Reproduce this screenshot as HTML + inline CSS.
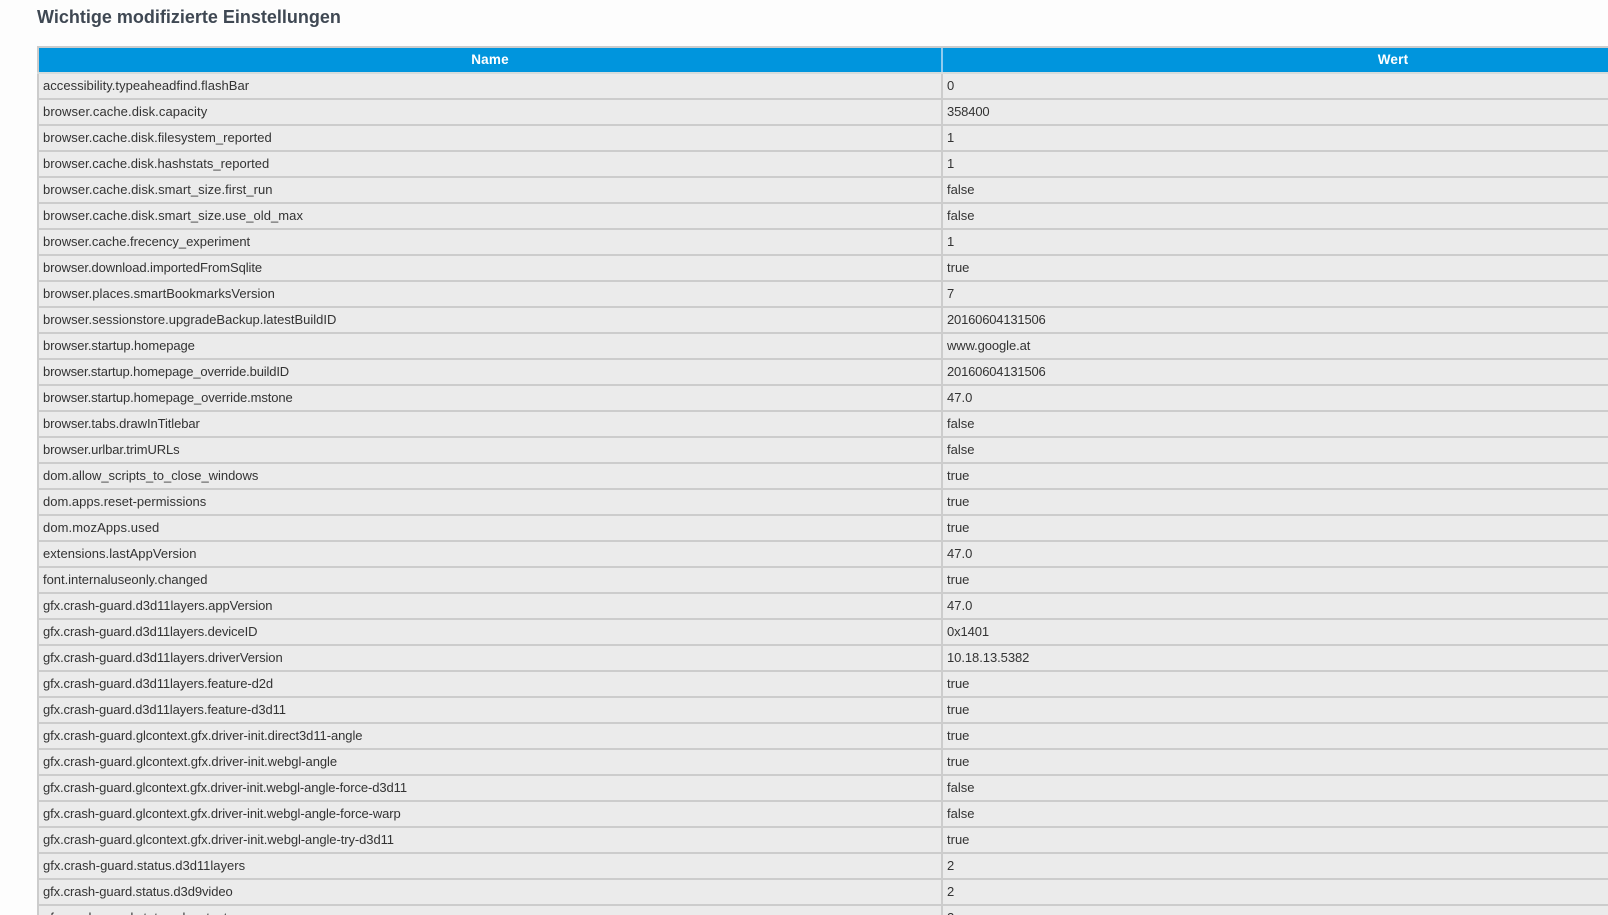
<!DOCTYPE html>
<html lang="de">
<head>
<meta charset="utf-8">
<title>Wichtige modifizierte Einstellungen</title>
<style>
html,body{margin:0;padding:0;width:1608px;height:915px;overflow:hidden;background:#fdfdfd;}
body{position:relative;font-family:"Liberation Sans",Arial,sans-serif;}
h2{position:absolute;left:37px;top:7px;margin:0;font-size:18px;line-height:20px;font-weight:bold;color:#3f4853;white-space:nowrap;}
table{position:absolute;left:37px;top:46px;width:1808px;table-layout:fixed;border-collapse:separate;border-spacing:2px;background:#cccccc;font-size:13px;color:#333;}
th{box-sizing:border-box;height:24px;padding:0 0 1px 0;background:#0095dd;color:#fff;font-size:13.5px;letter-spacing:.2px;line-height:23px;font-weight:bold;text-align:center;}
td{height:24px;padding:0 0 0 4px;background:#ebebeb;white-space:nowrap;overflow:hidden;line-height:24px;}
.sep{position:absolute;left:941px;top:48px;width:2px;height:24px;background:#8fcbef;}
.l{position:absolute;left:37px;top:72px;width:1571px;height:2px;background:#d5dcdc;}
</style>
</head>
<body>
<h2>Wichtige modifizierte Einstellungen</h2>
<table>
<colgroup><col style="width:902px"><col style="width:900px"></colgroup>
<tr><th>Name</th><th>Wert</th></tr>
<tr><td style="letter-spacing:.03px">accessibility.typeaheadfind.flashBar</td><td>0</td></tr>
<tr><td style="letter-spacing:.09px">browser.cache.disk.capacity</td><td style="letter-spacing:-.15px">358400</td></tr>
<tr><td style="letter-spacing:.03px">browser.cache.disk.filesystem_reported</td><td>1</td></tr>
<tr><td style="letter-spacing:.02px">browser.cache.disk.hashstats_reported</td><td>1</td></tr>
<tr><td style="letter-spacing:.05px">browser.cache.disk.smart_size.first_run</td><td>false</td></tr>
<tr><td style="letter-spacing:.05px">browser.cache.disk.smart_size.use_old_max</td><td>false</td></tr>
<tr><td style="letter-spacing:-.03px">browser.cache.frecency_experiment</td><td>1</td></tr>
<tr><td style="letter-spacing:-.08px">browser.download.importedFromSqlite</td><td>true</td></tr>
<tr><td style="letter-spacing:.02px">browser.places.smartBookmarksVersion</td><td>7</td></tr>
<tr><td>browser.sessionstore.upgradeBackup.latestBuildID</td><td style="letter-spacing:-.19px">20160604131506</td></tr>
<tr><td style="letter-spacing:-.09px">browser.startup.homepage</td><td style="letter-spacing:-.1px">www.google.at</td></tr>
<tr><td style="letter-spacing:-.15px">browser.startup.homepage_override.buildID</td><td style="letter-spacing:-.19px">20160604131506</td></tr>
<tr><td style="letter-spacing:-.12px">browser.startup.homepage_override.mstone</td><td>47.0</td></tr>
<tr><td style="letter-spacing:-.09px">browser.tabs.drawInTitlebar</td><td>false</td></tr>
<tr><td style="letter-spacing:-.13px">browser.urlbar.trimURLs</td><td>false</td></tr>
<tr><td style="letter-spacing:-.02px">dom.allow_scripts_to_close_windows</td><td>true</td></tr>
<tr><td>dom.apps.reset-permissions</td><td>true</td></tr>
<tr><td style="letter-spacing:.09px">dom.mozApps.used</td><td>true</td></tr>
<tr><td style="letter-spacing:.04px">extensions.lastAppVersion</td><td>47.0</td></tr>
<tr><td style="letter-spacing:-.03px">font.internaluseonly.changed</td><td>true</td></tr>
<tr><td style="letter-spacing:-.08px">gfx.crash-guard.d3d11layers.appVersion</td><td>47.0</td></tr>
<tr><td style="letter-spacing:-.1px">gfx.crash-guard.d3d11layers.deviceID</td><td style="letter-spacing:-.1px">0x1401</td></tr>
<tr><td style="letter-spacing:-.09px">gfx.crash-guard.d3d11layers.driverVersion</td><td style="letter-spacing:-.06px">10.18.13.5382</td></tr>
<tr><td style="letter-spacing:-.1px">gfx.crash-guard.d3d11layers.feature-d2d</td><td>true</td></tr>
<tr><td style="letter-spacing:-.11px">gfx.crash-guard.d3d11layers.feature-d3d11</td><td>true</td></tr>
<tr><td style="letter-spacing:-.07px">gfx.crash-guard.glcontext.gfx.driver-init.direct3d11-angle</td><td>true</td></tr>
<tr><td style="letter-spacing:-.07px">gfx.crash-guard.glcontext.gfx.driver-init.webgl-angle</td><td>true</td></tr>
<tr><td style="letter-spacing:-.1px">gfx.crash-guard.glcontext.gfx.driver-init.webgl-angle-force-d3d11</td><td>false</td></tr>
<tr><td style="letter-spacing:-.09px">gfx.crash-guard.glcontext.gfx.driver-init.webgl-angle-force-warp</td><td>false</td></tr>
<tr><td style="letter-spacing:-.08px">gfx.crash-guard.glcontext.gfx.driver-init.webgl-angle-try-d3d11</td><td>true</td></tr>
<tr><td>gfx.crash-guard.status.d3d11layers</td><td>2</td></tr>
<tr><td style="letter-spacing:-.08px">gfx.crash-guard.status.d3d9video</td><td>2</td></tr>
<tr><td>gfx.crash-guard.status.glcontext</td><td>2</td></tr>
</table>
<div class="l"></div>
<div class="sep"></div>
</body>
</html>
